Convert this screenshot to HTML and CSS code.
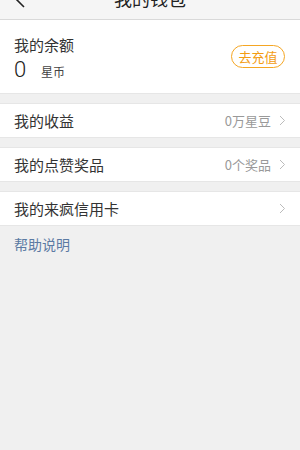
FILE: index.html
```html
<!DOCTYPE html>
<html lang="zh">
<head>
<meta charset="utf-8">
<link rel="stylesheet" href="styles.css">
</head>
<body>
<header class="topbar">
  <div class="back">
    <svg width="14" height="24" viewBox="0 0 14 24"><path d="M11 2 L3 10 L11 18" fill="none" stroke="#222" stroke-width="1.6"/></svg>
  </div>
  <div class="title">我的钱包</div>
  <div class="spacer"></div>
</header>
<section class="balance">
  <div class="bal-info">
    <div class="bal-label">我的余额</div>
    <div class="bal-amount"><span class="num">0</span><span class="unit">星币</span></div>
  </div>
  <div class="charge">去充值</div>
</section>
<section class="row">
  <span class="row-label">我的收益</span>
  <span class="row-value">0万星豆</span>
  <span class="chev"><svg width="7" height="11" viewBox="0 0 7 11"><path d="M1 1 L5.5 5.5 L1 10" fill="none" stroke="#bbb" stroke-width="1"/></svg></span>
</section>
<section class="row">
  <span class="row-label">我的点赞奖品</span>
  <span class="row-value">0个奖品</span>
  <span class="chev"><svg width="7" height="11" viewBox="0 0 7 11"><path d="M1 1 L5.5 5.5 L1 10" fill="none" stroke="#bbb" stroke-width="1"/></svg></span>
</section>
<section class="row">
  <span class="row-label">我的来疯信用卡</span>
  <span class="row-value"></span>
  <span class="chev"><svg width="7" height="11" viewBox="0 0 7 11"><path d="M1 1 L5.5 5.5 L1 10" fill="none" stroke="#bbb" stroke-width="1"/></svg></span>
</section>
<div class="help">帮助说明</div>
</body>
</html>
```

FILE: styles.css
```css
html, body {
  margin: 0;
  padding: 0;
}
body {
  background: #f0f0f0;
  font-family: "Noto Sans CJK SC", "Noto Sans", sans-serif;
  color: #333;
  width: 300px;
  height: 450px;
  overflow: hidden;
}
.topbar {
  height: 19px;
  background: #f5f5f5;
  border-bottom: 1px solid #d9d9d9;
  display: grid;
  grid-template-columns: 60px 1fr 60px;
  grid-template-rows: 19px;
  align-items: end;
  overflow: hidden;
}
.back {
  padding-left: 13px;
  height: 24px;
  margin-bottom: 6px;
}
.back svg { display: block; }
.title {
  text-align: center;
  font-size: 18px;
  line-height: 24px;
  margin-bottom: 9px;
  color: #222;
}
.balance {
  background: #fff;
  height: 74px;
  display: flex;
  align-items: center;
  justify-content: space-between;
  padding: 0 14px;
  box-sizing: border-box;
  border-bottom: 1px solid #e6e6e6;
}
.bal-info {
  display: flex;
  flex-direction: column;
  padding-top: 4px;
}
.bal-label {
  font-size: 15px;
  line-height: 20px;
  color: #333;
}
.bal-amount {
  display: flex;
  align-items: center;
  margin-top: 3px;
}
.num {
  font-family: "Roboto", "Noto Sans", sans-serif;
  font-size: 22px;
  line-height: 24px;
  font-weight: 300;
  color: #222;
  width: 27px;
}
.unit {
  font-size: 12px;
  color: #444;
  padding-top: 3px;
}
.charge {
  width: 54px;
  height: 23px;
  box-sizing: border-box;
  border: 1px solid #f5a623;
  border-radius: 12px;
  color: #f39c12;
  font-size: 13px;
  line-height: 21px;
  text-align: center;
  margin-right: 1px;
}
.row {
  background: #fff;
  height: 35px;
  box-sizing: border-box;
  margin-top: 9px;
  border-top: 1px solid #e6e6e6;
  border-bottom: 1px solid #e6e6e6;
  display: flex;
  align-items: center;
  padding: 0 14px;
}
.row-label {
  font-size: 15px;
  color: #333;
  flex: 1;
}
.row-value {
  font-size: 13px;
  color: #999;
  margin-right: 8px;
}
.chev { display: flex; }
.help {
  padding: 8px 14px;
  font-size: 14px;
  line-height: 20px;
  color: #5b7aa3;
}
```
